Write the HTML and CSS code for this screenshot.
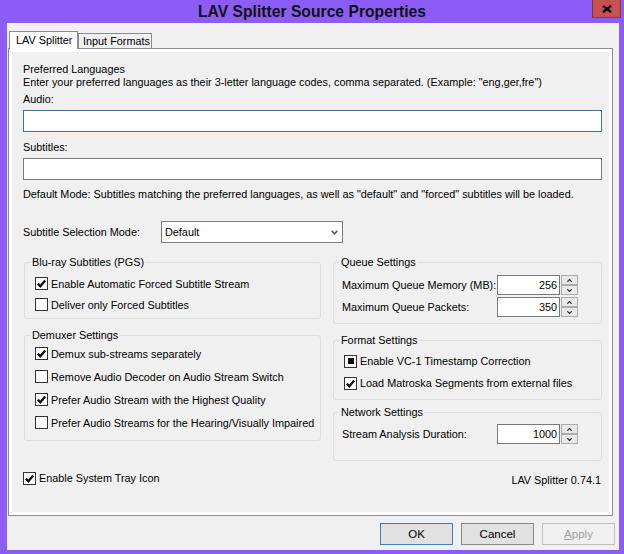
FILE: index.html
```html
<!DOCTYPE html>
<html lang="en">
<head>
<meta charset="utf-8">
<title>LAV Splitter Source Properties</title>
<link rel="stylesheet" href="styles.css">
</head>
<body>
<div class="window">
  <div class="titlebar">
    <span class="title">LAV Splitter Source Properties</span>
    <span class="close"><svg width="10" height="8" viewBox="0 0 10 8"><path d="M1 0.8 L9 7.2 M9 0.8 L1 7.2"/></svg></span>
  </div>
  <div class="client">
    <div class="tabs">
      <div class="tab active">LAV Splitter</div>
      <div class="tab">Input Formats</div>
    </div>
    <div class="panel">
      <div class="page">
        <div class="line">Preferred Languages</div>
        <div class="line">Enter your preferred languages as their 3-letter language codes, comma separated. (Example: "eng,ger,fre")</div>
        <div class="line lbl-audio">Audio:</div>
        <div class="edit focus"></div>
        <div class="line lbl-subs">Subtitles:</div>
        <div class="edit"></div>
        <div class="line note">Default Mode: Subtitles matching the preferred languages, as well as "default" and "forced" subtitles will be loaded.</div>
        <div class="mode-row">
          <span class="mode-label">Subtitle Selection Mode:</span>
          <div class="combo"><span>Default</span><svg class="chev" width="7" height="5" viewBox="0 0 7 5"><path d="M0.7 0.8 L3.5 3.8 L6.3 0.8"/></svg></div>
        </div>
        <div class="columns">
          <div class="col">
            <fieldset class="group bluray">
              <legend>Blu-ray Subtitles (PGS)</legend>
              <div class="check-row"><span class="cb"><svg width="11" height="11" viewBox="0 0 11 11"><path d="M1.8 5.6 L4.3 8.2 L9.2 2.4"/></svg></span>Enable Automatic Forced Subtitle Stream</div>
              <div class="check-row"><span class="cb"></span>Deliver only Forced Subtitles</div>
            </fieldset>
            <fieldset class="group demux">
              <legend>Demuxer Settings</legend>
              <div class="check-row"><span class="cb"><svg width="11" height="11" viewBox="0 0 11 11"><path d="M1.8 5.6 L4.3 8.2 L9.2 2.4"/></svg></span>Demux sub-streams separately</div>
              <div class="check-row"><span class="cb"></span>Remove Audio Decoder on Audio Stream Switch</div>
              <div class="check-row"><span class="cb"><svg width="11" height="11" viewBox="0 0 11 11"><path d="M1.8 5.6 L4.3 8.2 L9.2 2.4"/></svg></span>Prefer Audio Stream with the Highest Quality</div>
              <div class="check-row"><span class="cb"></span>Prefer Audio Streams for the Hearing/Visually Impaired</div>
            </fieldset>
          </div>
          <div class="col">
            <fieldset class="group queue">
              <legend>Queue Settings</legend>
              <div class="spin-row"><span class="spin-label">Maximum Queue Memory (MB):</span>
                <div class="spin"><div class="spin-input">256</div><div class="spin-btns"><span class="sb"><svg width="5" height="3" viewBox="0 0 5 3"><path d="M0.3 2.7 L2.5 0.5 L4.7 2.7"/></svg></span><span class="sb"><svg width="5" height="3" viewBox="0 0 5 3"><path d="M0.3 0.3 L2.5 2.5 L4.7 0.3"/></svg></span></div></div>
              </div>
              <div class="spin-row"><span class="spin-label">Maximum Queue Packets:</span>
                <div class="spin"><div class="spin-input">350</div><div class="spin-btns"><span class="sb"><svg width="5" height="3" viewBox="0 0 5 3"><path d="M0.3 2.7 L2.5 0.5 L4.7 2.7"/></svg></span><span class="sb"><svg width="5" height="3" viewBox="0 0 5 3"><path d="M0.3 0.3 L2.5 2.5 L4.7 0.3"/></svg></span></div></div>
              </div>
            </fieldset>
            <fieldset class="group format">
              <legend>Format Settings</legend>
              <div class="check-row"><span class="cb mixed"><span class="sq"></span></span>Enable VC-1 Timestamp Correction</div>
              <div class="check-row"><span class="cb"><svg width="11" height="11" viewBox="0 0 11 11"><path d="M1.8 5.6 L4.3 8.2 L9.2 2.4"/></svg></span>Load Matroska Segments from external files</div>
            </fieldset>
            <fieldset class="group network">
              <legend>Network Settings</legend>
              <div class="spin-row"><span class="spin-label">Stream Analysis Duration:</span>
                <div class="spin"><div class="spin-input">1000</div><div class="spin-btns"><span class="sb"><svg width="5" height="3" viewBox="0 0 5 3"><path d="M0.3 2.7 L2.5 0.5 L4.7 2.7"/></svg></span><span class="sb"><svg width="5" height="3" viewBox="0 0 5 3"><path d="M0.3 0.3 L2.5 2.5 L4.7 0.3"/></svg></span></div></div>
              </div>
            </fieldset>
          </div>
        </div>
        <div class="footer">
          <div class="check-row tray"><span class="cb"><svg width="11" height="11" viewBox="0 0 11 11"><path d="M1.8 5.6 L4.3 8.2 L9.2 2.4"/></svg></span>Enable System Tray Icon</div>
          <span class="version">LAV Splitter 0.74.1</span>
        </div>
      </div>
    </div>
    <div class="buttons">
      <span class="btn default">OK</span>
      <span class="btn">Cancel</span>
      <span class="btn disabled"><span class="u">A</span>pply</span>
    </div>
  </div>
</div>
</body>
</html>
```

FILE: styles.css
```css
* { box-sizing: border-box; }
html, body { margin: 0; padding: 0; }
body {
  width: 624px;
  height: 554px;
  overflow: hidden;
  font-family: "Liberation Sans", Arial, sans-serif;
  font-size: 10.85px;
  color: #000;
}
.window {
  width: 624px;
  height: 554px;
  background: #8b5cf6;
  display: flex;
  flex-direction: column;
  position: relative;
}
.titlebar {
  height: 23px;
  display: flex;
  align-items: center;
  justify-content: center;
}
.title {
  font-weight: bold;
  font-size: 15.7px;
  line-height: 23px;
  color: #111;
}
.close {
  position: absolute;
  top: 0;
  right: 3px;
  width: 29px;
  height: 18px;
  background: #c75050;
  border: 1px solid #7d3b3b;
  border-top: none;
  display: flex;
  align-items: center;
  justify-content: center;
}
.close path { stroke: #000; stroke-width: 2.3; fill: none; }
.client {
  margin: 0 5px 4px 7px;
  flex: 1;
  background: #f0f0f0;
  padding-top: 8px;
}
.tabs {
  display: flex;
  align-items: flex-end;
  height: 18px;
  margin: 0 0 -1px 2px;
}
.tab {
  height: 15px;
  width: 74px;
  margin-bottom: 1px;
  border: 1px solid #898c95;
  border-bottom: none;
  background: #f0f0f0;
  padding: 1px 0 0 4px;
  line-height: 13px;
}
.tab.active {
  height: 18px;
  width: 69px;
  margin-bottom: 0;
  background: #fff;
  padding: 2px 0 0 6px;
  position: relative;
  z-index: 1;
}
.panel {
  margin-left: 1px;
  width: 605px;
  height: 468px;
  border: 1px solid #898c95;
  background: #fff;
  padding: 3px;
}
.page {
  height: 460px;
  background: #f0f0f0;
  padding: 11px 7px 0 11px;
}
.line { line-height: 13px; white-space: nowrap; }
.lbl-audio { margin-top: 4px; }
.lbl-subs { margin-top: 9px; }
.note { margin-top: 8px; }
.edit {
  height: 22px;
  margin-top: 4px;
  background: #fff;
  border: 1px solid #7a7a7a;
}
.edit.focus { border-color: #4a6e94; }
.mode-row {
  margin-top: 20px;
  height: 22px;
  display: flex;
  align-items: center;
}
.mode-label { width: 138px; }
.combo {
  width: 182px;
  height: 22px;
  background: #fff;
  border: 1px solid #7a7a7a;
  display: flex;
  align-items: center;
  justify-content: space-between;
  padding: 0 4px 0 3px;
}
.chev path { stroke: #5a5a5a; stroke-width: 1.6; fill: none; }
.columns {
  margin: 13px 0 0 1px;
  display: grid;
  grid-template-columns: 297px 269px;
  column-gap: 12px;
  align-items: start;
}
.col { display: flex; flex-direction: column; }
.group {
  margin: 0;
  min-width: 0;
  border: 1px solid #dcdcdc;
  border-radius: 3px;
}
.group legend {
  line-height: 13px;
  padding: 0 1px;
}
.bluray { padding: 4px 10px 3px 10px; }
.bluray legend { margin-left: -4px; }
.demux { margin-top: 10px; padding: 0 10px 6px 10px; }
.demux legend { margin-left: -4px; }
.demux .check-row { height: 23px; }
.queue { padding: 5px 8px 5px 8px; }
.queue legend { margin-left: -2px; }
.format { margin-top: 10px; padding: 3px 10px 5px 10px; }
.format legend { margin-left: -4px; }
.format .check-row { height: 22px; }
.network { margin-top: 6px; padding: 4px 8px 15px 8px; }
.network legend { margin-left: -2px; }
.check-row {
  height: 21px;
  display: flex;
  align-items: center;
  gap: 3px;
  white-space: nowrap;
}
.cb {
  width: 13px;
  height: 13px;
  flex: none;
  border: 1px solid #333;
  background: #fff;
  display: flex;
  align-items: center;
  justify-content: center;
}
.cb path { stroke: #111; stroke-width: 2.3; fill: none; }
.cb .sq { width: 6px; height: 6px; background: #111; }
.spin-row {
  height: 22px;
  display: flex;
  align-items: center;
}
.spin-label { width: 155px; white-space: nowrap; }
.spin { display: flex; height: 20px; }
.spin-input {
  width: 63px;
  height: 20px;
  background: #fff;
  border: 1px solid #7a7a7a;
  text-align: right;
  padding-right: 2px;
  line-height: 18px;
}
.spin-btns {
  margin-left: 1px;
  width: 17px;
  display: flex;
  flex-direction: column;
}
.sb {
  height: 10px;
  border: 1px solid #acacac;
  background: #e8e8e8;
  display: flex;
  align-items: center;
  justify-content: center;
}
.sb path { stroke: #333; stroke-width: 1.2; fill: none; }
.footer {
  margin-top: 8px;
  height: 18px;
  display: flex;
  align-items: center;
  justify-content: space-between;
  padding-right: 1px;
}
.tray { height: 18px; }
.version { padding-top: 3px; }
.buttons {
  margin-top: 7px;
  display: flex;
  justify-content: flex-end;
  gap: 8px;
  padding-right: 4px;
}
.btn {
  width: 73px;
  height: 22px;
  border: 1px solid #8a8a8a;
  background: #e1e1e1;
  display: flex;
  align-items: center;
  justify-content: center;
  font-size: 11.5px;
}
.btn.default { border-color: #3c7fb1; }
.btn.disabled { border-color: #bfbfbf; background: #f0f0f0; color: #a0a0a0; }
.u { text-decoration: underline; }
```
